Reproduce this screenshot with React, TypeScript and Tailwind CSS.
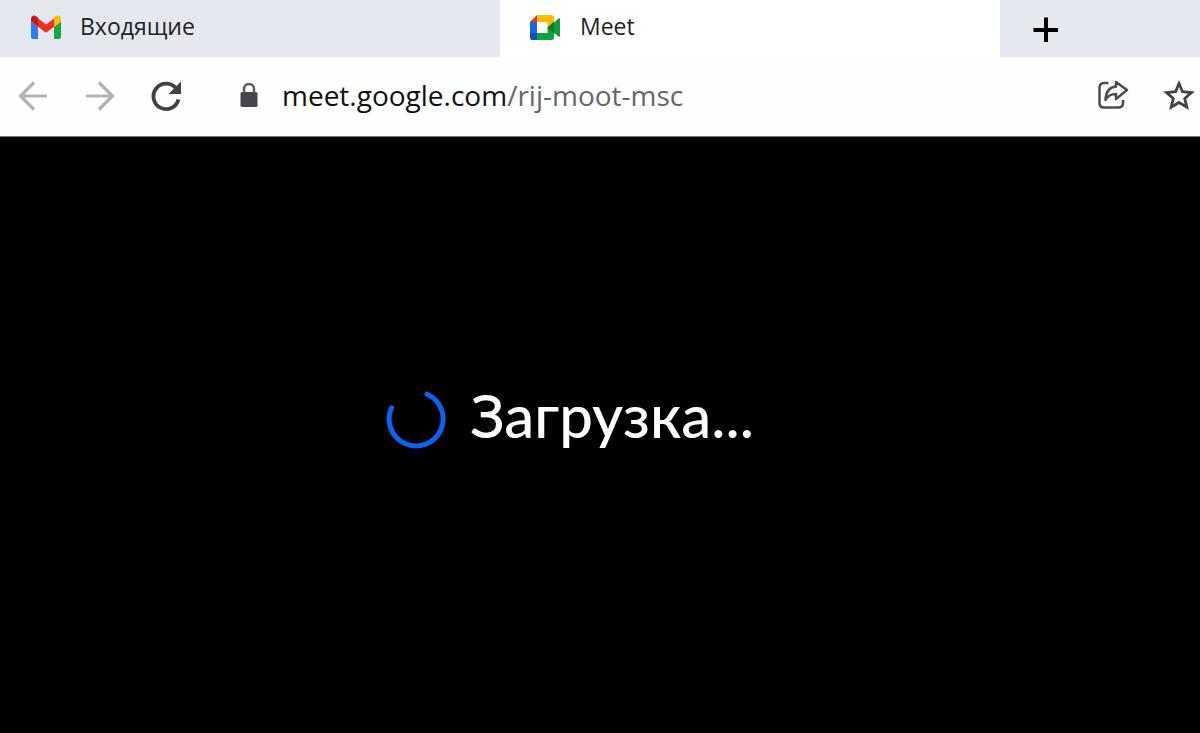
import { useState } from 'react'
import { clsx } from 'clsx'
import type { ReactNode } from 'react'

const HOST = 'meet.google.com'
const PATH = '/rij-moot-msc'

const tabs = [
  { id: 'inbox', title: 'Входящие', icon: <GmailIcon /> },
  { id: 'meet', title: 'Meet', icon: <MeetIcon /> },
]

export default function App() {
  const [active, setActive] = useState('meet')

  return (
    <div className="flex min-h-screen flex-col bg-black font-['Open_Sans',sans-serif]">
      {/* Tab strip */}
      <div role="tablist" className="flex h-[57px] bg-[#e5e8ee]">
        {tabs.map((tab) => (
          <button
            key={tab.id}
            role="tab"
            aria-selected={active === tab.id}
            onClick={() => setActive(tab.id)}
            className={clsx(
              'flex w-5/12 items-center gap-4 px-7 pb-1 text-[23px] text-[#222428]',
              active === tab.id && 'bg-white',
            )}
          >
            {tab.icon}
            <span>{tab.title}</span>
          </button>
        ))}
        <button aria-label="Новая вкладка" className="ml-8 flex items-center text-black">
          <svg viewBox="0 0 26 26" className="size-[26px]" fill="none" stroke="currentColor" strokeWidth="4">
            <path d="M14 1.500V26.500M1.500 14H26.500" />
          </svg>
        </button>
      </div>

      {/* Toolbar */}
      <div className="flex h-20 items-center border-b border-[#777] bg-[#fdfefe] pr-1 pb-1 pl-4">
        <div className="flex items-center gap-8">
          <ToolButton label="Назад" className="text-[#b3b3b3]">
            <path d="M31 18H5M18 4.500L4.500 18L18 31.500" strokeWidth="3.200" />
          </ToolButton>
          <ToolButton label="Вперёд" className="text-[#b3b3b3]">
            <path d="M4 18H30M17 4.500L30.500 18L17 31.500" strokeWidth="3.200" />
          </ToolButton>
          <ToolButton label="Обновить" className="text-[#3f4247]">
            <path d="M28.500 11A12.700 12.700 0 1 0 30.500 21.500" strokeWidth="3.800" />
            <path d="M33 3.500V16H20.500Z" fill="currentColor" stroke="none" />
          </ToolButton>
        </div>
        <AddressBar />
        <div className="flex items-center gap-8">
          <ToolButton label="Поделиться" className="text-[#4c4c4e]">
            <path
              d="M12.500 5H8Q3.500 5 3.500 10V25Q3.500 29.500 8 29.500H22Q27 29.500 27 25V22"
              strokeWidth="2.500"
            />
            <path
              d="M20 4L31 12L20 21V16Q12.500 16 9.500 22Q10 9.500 20 8.500Z"
              strokeWidth="2.500"
              strokeLinejoin="round"
            />
          </ToolButton>
          <ToolButton label="Добавить в закладки" className="text-[#444]">
            <path
              d="M17 5.500L20.500 13.700L29.500 14.500L22.700 20.400L24.800 29.200L17 24.500L9.200 29.200L11.300 20.400L4.500 14.500L13.500 13.700Z"
              strokeWidth="2.800"
            />
          </ToolButton>
        </div>
      </div>

      {/* Page */}
      <main className="flex flex-1 items-center justify-center gap-6 pr-[60px] pb-8">
        <svg viewBox="0 0 60 60" className="size-[60px]" fill="none" aria-hidden="true">
          <path
            d="M41 5.200A27 27 0 1 1 5.500 18.800"
            stroke="#0b63f0"
            strokeWidth="5"
            strokeLinecap="round"
          />
        </svg>
        <p role="status" className="pb-2 font-['Lato',sans-serif] text-6xl font-medium text-white">
          Загрузка...
        </p>
      </main>
    </div>
  )
}

// Shows the split-colour URL, switches to a text box on click
function AddressBar() {
  const [editing, setEditing] = useState(false)
  const [url, setUrl] = useState(HOST + PATH)

  return (
    <div className="flex flex-1 items-center gap-5 pl-[58px] text-[28px]">
      <svg viewBox="0 0 18 24" className="h-6 w-[18px]" aria-hidden="true">
        <rect x="0.500" y="9" width="17" height="15" rx="1.500" fill="#45474d" />
        <path d="M4 10V6A5 5 0 0 1 14 6V10" fill="none" stroke="#5b5d63" strokeWidth="2.500" />
      </svg>
      {editing ? (
        <input
          autoFocus
          aria-label="Адрес"
          value={url}
          onChange={(e) => setUrl(e.target.value)}
          onBlur={() => setEditing(false)}
          className="flex-1 bg-transparent px-1 text-black outline-none"
        />
      ) : (
        <button onClick={() => setEditing(true)} className="flex-1 cursor-text px-1 text-left text-[#66676a]">
          <span className="text-[#111]">{HOST}</span>
          {PATH}
        </button>
      )}
    </div>
  )
}

function ToolButton({
  label,
  className,
  children,
}: {
  label: string
  className: string
  children: ReactNode
}) {
  return (
    <button aria-label={label} className={className}>
      <svg viewBox="0 0 34 34" className="size-[34px]" fill="none" stroke="currentColor">
        {children}
      </svg>
    </button>
  )
}

function GmailIcon() {
  return (
    <svg viewBox="0 0 36 28" className="h-7 w-9 shrink-0" aria-hidden="true">
      <path d="M3 8.500L10 13.800V26H5Q3 26 3 24Z" fill="#2f7bf6" />
      <path d="M26 13.800L33 8.500V24Q33 26 31 26H26Z" fill="#1fa446" />
      <path d="M10 5.500L18 11.500L26 5.500V13.800L18 19.800L10 13.800Z" fill="#f0301f" />
      <path d="M3 6.500Q3 2.500 6.500 2.500Q8 2.800 10 4.500V13.800L3 8.500Z" fill="#c5161c" />
      <path d="M33 6.500Q33 2.500 29.500 2.500Q28 2.800 26 4.500V13.800L33 8.500Z" fill="#fbbc04" />
    </svg>
  )
}

function MeetIcon() {
  return (
    <svg viewBox="0 0 36 28" className="h-7 w-9 shrink-0" aria-hidden="true">
      <path d="M2 9L9 2V9Z" fill="#e8352c" />
      <path d="M9 2H23Q26 2 26 4.500V14L19.500 16V9H9Z" fill="#fcba04" />
      <path d="M2 9H9V20H2Z" fill="#1667e8" />
      <path d="M2 20H9V27H4Q2 27 2 25Z" fill="#0f52c4" />
      <path d="M9 20H19.500V14L26 19V24.500Q26 27 23 27H9Z" fill="#12a23c" />
      <path d="M19.500 14.500L26 8.500V20.500Z" fill="#0a7a2b" />
      <path d="M26 9.500L30.500 5.500Q32 4.600 32 6.500V23Q32 24.600 30.500 23.500L26 20Z" fill="#129b3a" />
    </svg>
  )
}
